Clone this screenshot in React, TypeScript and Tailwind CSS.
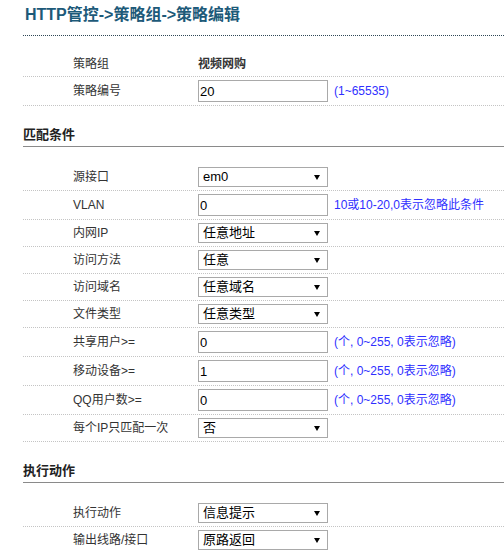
import type { ReactNode } from "react";

type Field =
  | { kind: "text"; label: string; value: string }
  | { kind: "input"; label: string; value: string; hint?: string }
  | { kind: "select"; label: string; value: string };

const HINT_255 = "(个, 0~255, 0表示忽略)";

const BASIC: Field[] = [
  { kind: "text", label: "策略组", value: "视频网购" },
  { kind: "input", label: "策略编号", value: "20", hint: "(1~65535)" },
];

const MATCH: Field[] = [
  { kind: "select", label: "源接口", value: "em0" },
  { kind: "input", label: "VLAN", value: "0", hint: "10或10-20,0表示忽略此条件" },
  { kind: "select", label: "内网IP", value: "任意地址" },
  { kind: "select", label: "访问方法", value: "任意" },
  { kind: "select", label: "访问域名", value: "任意域名" },
  { kind: "select", label: "文件类型", value: "任意类型" },
  { kind: "input", label: "共享用户>=", value: "0", hint: HINT_255 },
  { kind: "input", label: "移动设备>=", value: "1", hint: HINT_255 },
  { kind: "input", label: "QQ用户数>=", value: "0", hint: HINT_255 },
  { kind: "select", label: "每个IP只匹配一次", value: "否" },
];

const ACTION: Field[] = [
  { kind: "select", label: "执行动作", value: "信息提示" },
  { kind: "select", label: "输出线路/接口", value: "原路返回" },
];

function FakeSelect({ value }: { value: string }) {
  return (
    <div className="flex h-[20px] w-[130px] items-center justify-between border border-[#a9a9a9] bg-white pl-[4px] pr-[7px] text-[13px] leading-[18px] text-black">
      <span>{value}</span>
      <svg width="6" height="5" viewBox="0 0 6 5" className="shrink-0">
        <path d="M0 0h6L3 5z" fill="#000" />
      </svg>
    </div>
  );
}

function Row({ field }: { field: Field }) {
  const height =
    field.kind === "text" ? "h-[25px]" : field.kind === "input" ? "h-[29px]" : "h-[27px]";

  return (
    <div className={`flex items-center border-b border-dotted border-[#c4c4c4] ${height}`}>
      <div className="w-[175px] shrink-0 pl-[50px] leading-[16px]">{field.label}</div>
      <div className="flex items-center gap-[6px]">
        {field.kind === "text" && <span className="font-bold leading-[16px]">{field.value}</span>}
        {field.kind === "input" && (
          <>
            <input
              readOnly
              value={field.value}
              className="h-[22px] w-[130px] border border-[#a9a9a9] bg-white px-[1px] text-[13px] text-black outline-none"
            />
            {field.hint && <span className="text-[#2f2fff]">{field.hint}</span>}
          </>
        )}
        {field.kind === "select" && <FakeSelect value={field.value} />}
      </div>
    </div>
  );
}

function SectionTitle({ children }: { children: ReactNode }) {
  return (
    <div className="h-[41px] border-b border-[#8a8a8a] pt-[21px] text-[13px] font-bold leading-[16px] text-[#222]">
      {children}
    </div>
  );
}

export default function App() {
  return (
    <div className="h-[552px] w-[504px] overflow-hidden bg-white font-['Liberation_Sans','Noto_Sans_CJK_SC',sans-serif] text-[12px] text-[#333]">
      <div className="ml-[23px]">
        <div className="h-[36px] border-b border-dotted border-[#2e4756] pl-[2px] pt-[3px] text-[16px] font-bold leading-[24px] text-[#1d5a79]">
          HTTP管控-&gt;策略组-&gt;策略编辑
        </div>

        <div className="mt-[16px]">
          {BASIC.map((f) => (
            <Row key={f.label} field={f} />
          ))}
        </div>

        <SectionTitle>匹配条件</SectionTitle>
        <div className="mt-[17px]">
          {MATCH.map((f) => (
            <Row key={f.label} field={f} />
          ))}
        </div>

        <SectionTitle>执行动作</SectionTitle>
        <div className="mt-[17px]">
          {ACTION.map((f) => (
            <Row key={f.label} field={f} />
          ))}
        </div>
      </div>
    </div>
  );
}
